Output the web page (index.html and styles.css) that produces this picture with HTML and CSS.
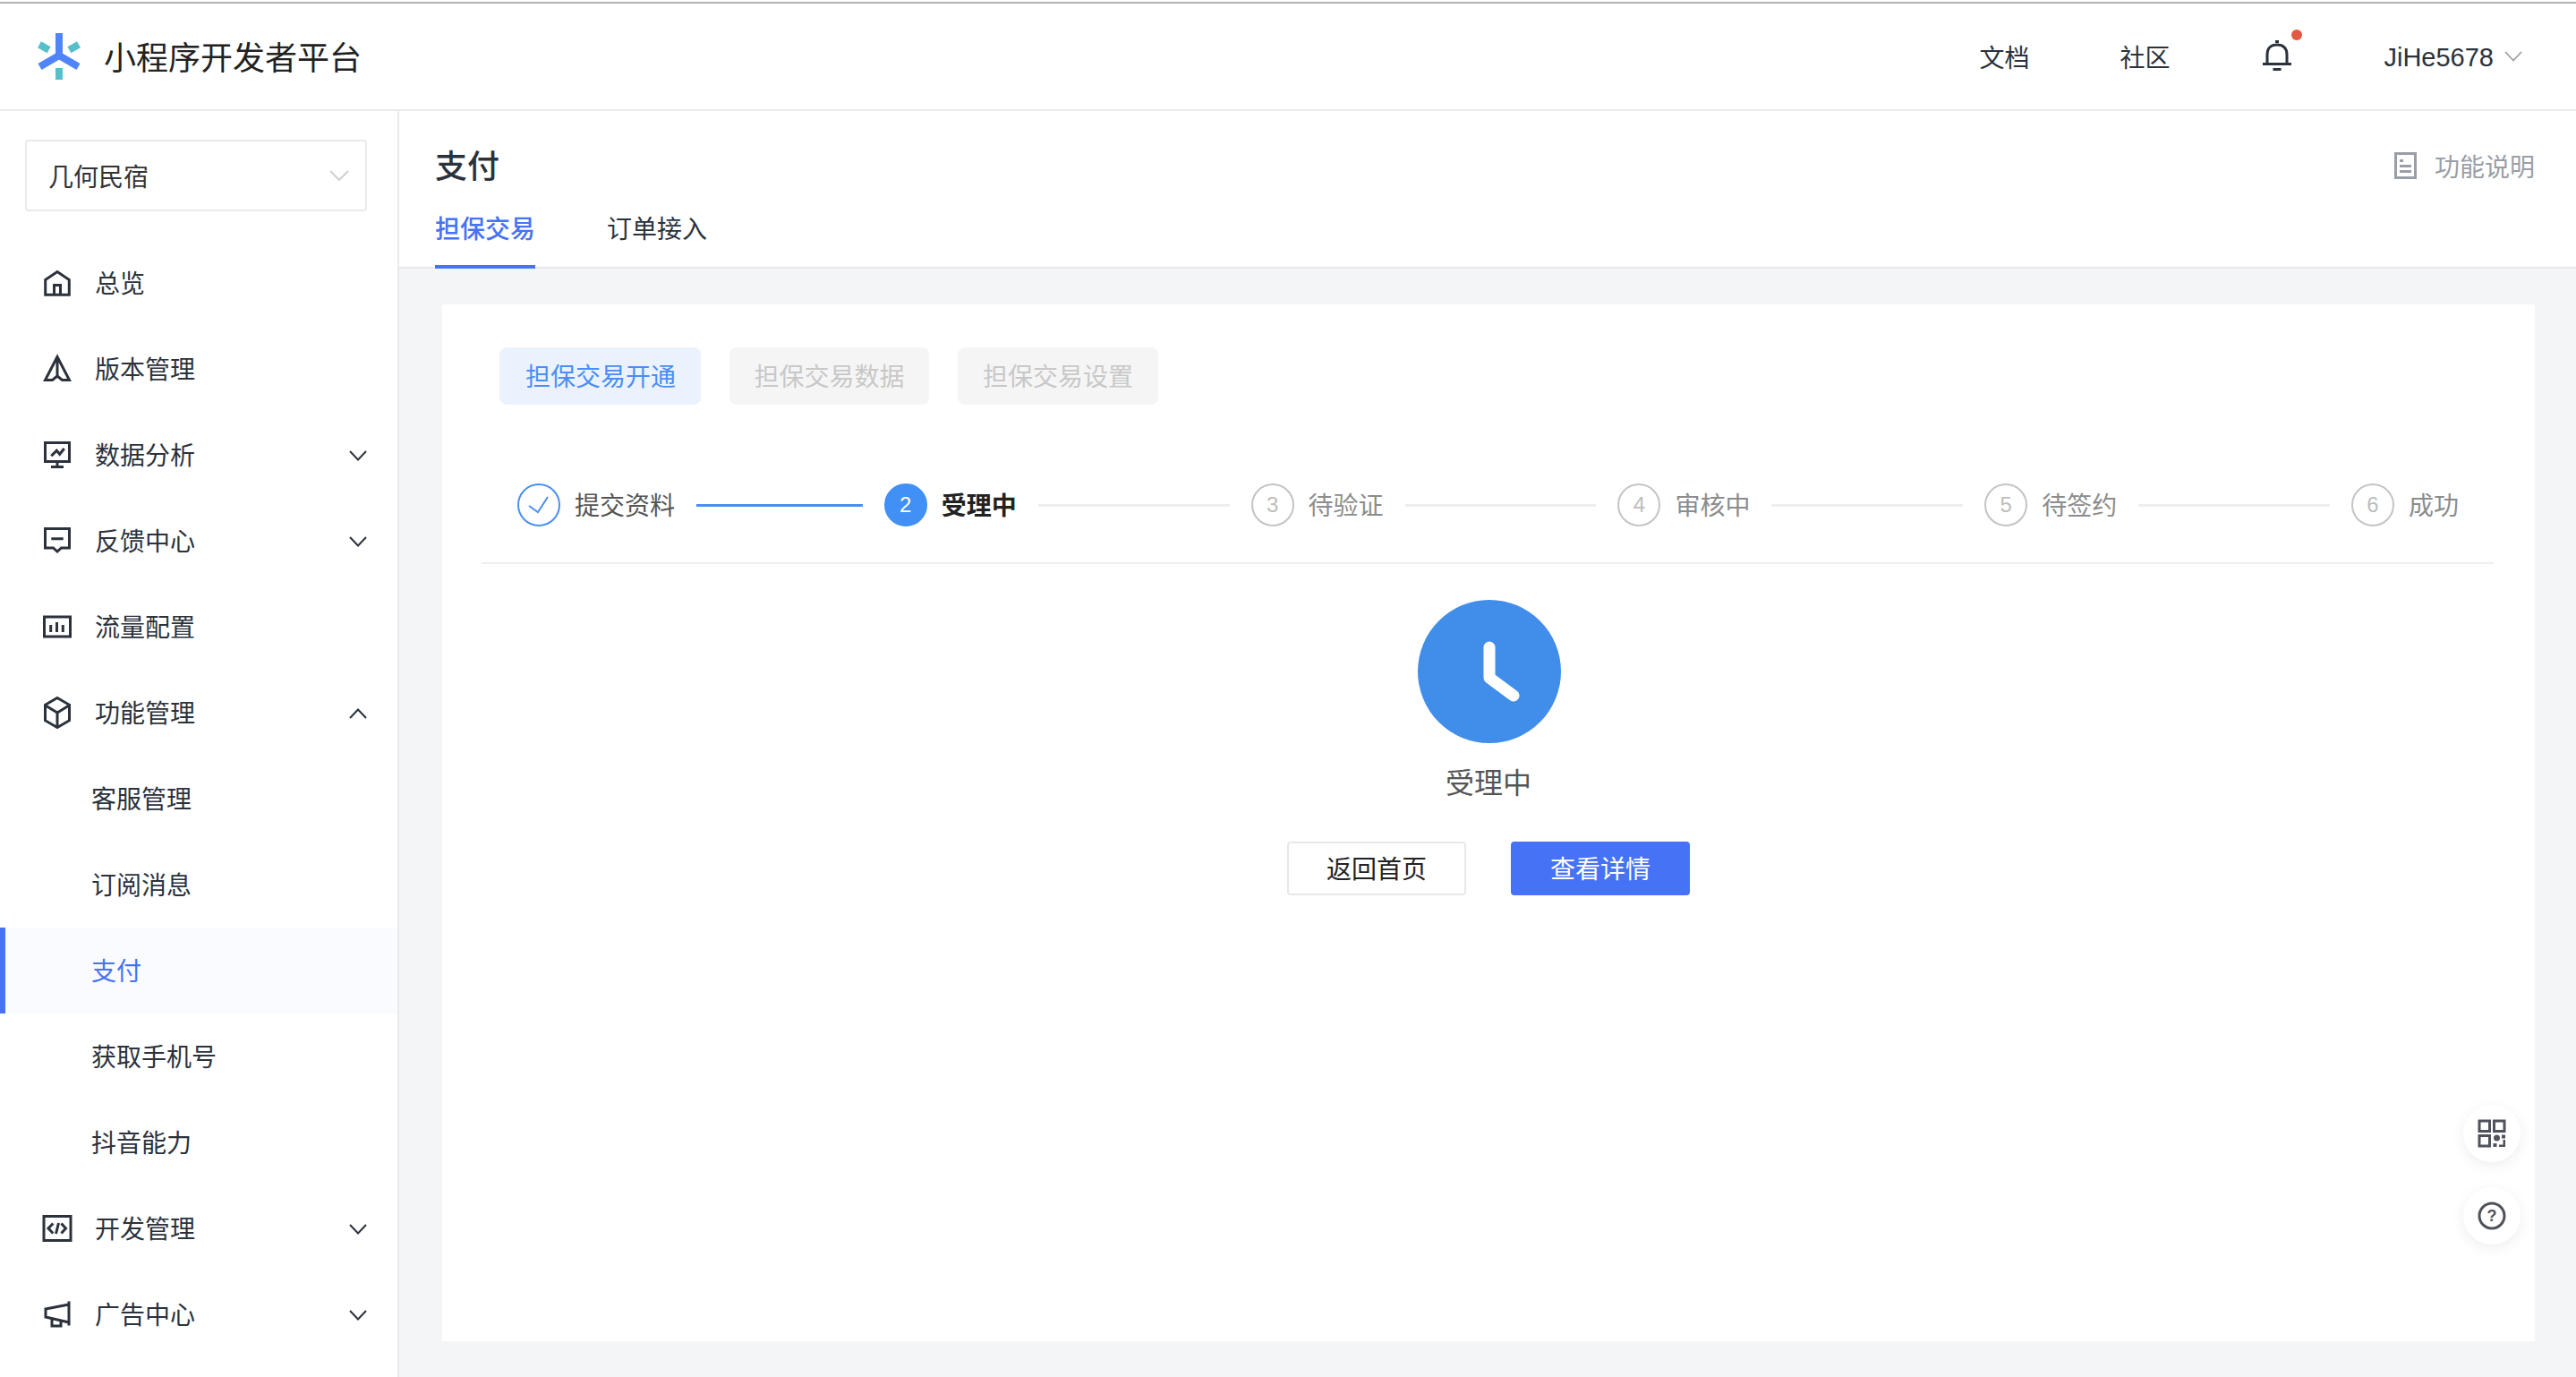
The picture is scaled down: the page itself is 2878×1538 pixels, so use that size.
FILE: index.html
```html
<!DOCTYPE html>
<html lang="zh-CN">
<head>
<meta charset="utf-8">
<title>小程序开发者平台</title>
<link rel="stylesheet" href="styles.css">
</head>
<body>
<div class="app">
  <div class="edge"></div>
  <header class="topbar">
    <div class="brand">
      <svg class="logo" viewBox="0 0 50 52" width="50" height="52">
        <path d="M25 0V26M25 25L3.5 37.500M25 25L46.500 37.500" fill="none" stroke="#4f84fb" stroke-width="8"/>
        <path d="M25 39V52M3 12.700L13.600 18.700M36.400 18.700L47 12.700" fill="none" stroke="#56c0c9" stroke-width="8"/>
      </svg>
      <span class="brand-name">小程序开发者平台</span>
    </div>
    <nav class="topnav">
      <a class="topnav-link">文档</a>
      <a class="topnav-link">社区</a>
      <span class="bell">
        <svg viewBox="0 0 34 36" width="34" height="36" fill="none" stroke="#2b323c" stroke-width="3">
          <path d="M1 26.500H33M6 26V16C6 9 10 5 17 5C24 5 28 9 28 16V26M15 1.500H19M12.500 32.500H21.500"/>
        </svg>
        <i class="bell-dot"></i>
      </span>
      <span class="user">JiHe5678</span>
      <svg class="user-caret" viewBox="0 0 20 12" width="20" height="12"><path d="M1 1L10 10.500L19 1" fill="none" stroke="#9a9ea6" stroke-width="1.800"/></svg>
    </nav>
  </header>
  <div class="main">
    <aside class="sidebar">
      <div class="select">
        <span class="select-text">几何民宿</span>
        <svg viewBox="0 0 22 12" width="22" height="12"><path d="M1 1L11 11L21 1" fill="none" stroke="#cfd0d4" stroke-width="2"/></svg>
      </div>
      <ul class="menu">
        <li class="menu-item">
          <svg class="ico" viewBox="0 0 32 32"><path d="M2.700 29.300V12.500L16 3.500L29.300 12.500V29.300Z"/><path d="M12.500 29V18.500H19.500V29"/></svg>
          <span class="menu-label">总览</span>
        </li>
        <li class="menu-item">
          <svg class="ico" viewBox="0 0 32 32"><path d="M16 2.500L2.500 28.500H10.500L16 24L21.500 28.500H29.500ZM16 2.500V24"/></svg>
          <span class="menu-label">版本管理</span>
        </li>
        <li class="menu-item">
          <svg class="ico" viewBox="0 0 32 32"><path d="M2.500 2.500H29.500V23.500H2.500ZM16 23.500V29M9 29.500H23"/><path d="M9.300 17.300L15.300 11.300L18.700 15.300L23.700 9"/></svg>
          <span class="menu-label">数据分析</span>
          <svg class="caret" viewBox="0 0 20 12"><path d="M1 1L10 10.500L19 1"/></svg>
        </li>
        <li class="menu-item">
          <svg class="ico" viewBox="0 0 32 32"><path d="M2.500 2.500H29.500V24H20.500L16 28L11.500 24H2.500ZM9.300 13.700H22.700"/></svg>
          <span class="menu-label">反馈中心</span>
          <svg class="caret" viewBox="0 0 20 12"><path d="M1 1L10 10.500L19 1"/></svg>
        </li>
        <li class="menu-item">
          <svg class="ico" viewBox="0 0 32 32"><path d="M1.500 5H30.500V27H1.500ZM8.700 14V22M15.500 11V22M22.300 14V22"/></svg>
          <span class="menu-label">流量配置</span>
        </li>
        <li class="menu-item">
          <svg class="ico" viewBox="0 0 32 32"><path d="M16 -0.500L29.500 7.300V24.700L16 32.500L2.500 24.700V7.300ZM2.500 7.800L16 16L29.500 7.800M16 16V32"/></svg>
          <span class="menu-label">功能管理</span>
          <svg class="caret" viewBox="0 0 20 12"><path d="M1 11L10 1.500L19 11"/></svg>
        </li>
        <li class="menu-item sub">客服管理</li>
        <li class="menu-item sub">订阅消息</li>
        <li class="menu-item sub active">支付</li>
        <li class="menu-item sub">获取手机号</li>
        <li class="menu-item sub">抖音能力</li>
        <li class="menu-item">
          <svg class="ico" viewBox="0 0 32 32"><path d="M1 2.500H31V29.500H1ZM11.300 10.500L6 16L11.300 21.500M20.500 10.500L25.500 16L20.500 21.500M17.500 10L14.500 22"/></svg>
          <span class="menu-label">开发管理</span>
          <svg class="caret" viewBox="0 0 20 12"><path d="M1 1L10 10.500L19 1"/></svg>
        </li>
        <li class="menu-item">
          <svg class="ico" viewBox="0 0 32 32"><path d="M29 1.500V28.500M29 5L3 10V19L29 25M10 21V29H20V23"/></svg>
          <span class="menu-label">广告中心</span>
          <svg class="caret" viewBox="0 0 20 12"><path d="M1 1L10 10.500L19 1"/></svg>
        </li>
      </ul>
    </aside>
    <section class="page">
      <div class="page-head">
        <div class="title-row">
          <h1 class="title">支付</h1>
          <a class="doc-link">
            <svg viewBox="0 0 25 30" width="25" height="30" fill="none" stroke="#9a9ea6" stroke-width="3"><path d="M1.500 1.500H23.500V28.500H1.500ZM6 9.500H10M6 15.500H19M6 21.500H19"/></svg>
            <span>功能说明</span>
          </a>
        </div>
        <div class="tabs">
          <a class="tab current">担保交易</a>
          <a class="tab">订单接入</a>
        </div>
      </div>
      <div class="page-body">
        <div class="card">
          <div class="chips">
            <span class="chip on">担保交易开通</span>
            <span class="chip">担保交易数据</span>
            <span class="chip">担保交易设置</span>
          </div>
          <div class="steps">
            <div class="step done">
              <span class="dot"><svg viewBox="0 0 44 44" width="44" height="44"><path d="M11 23L21 30L32 13" fill="none" stroke="#4a90f0" stroke-width="2"/></svg></span>
              <span class="step-title">提交资料</span>
              <i class="step-line"></i>
            </div>
            <div class="step now">
              <span class="dot">2</span>
              <span class="step-title">受理中</span>
              <i class="step-line"></i>
            </div>
            <div class="step">
              <span class="dot">3</span>
              <span class="step-title">待验证</span>
              <i class="step-line"></i>
            </div>
            <div class="step">
              <span class="dot">4</span>
              <span class="step-title">审核中</span>
              <i class="step-line"></i>
            </div>
            <div class="step">
              <span class="dot">5</span>
              <span class="step-title">待签约</span>
              <i class="step-line"></i>
            </div>
            <div class="step last">
              <span class="dot">6</span>
              <span class="step-title">成功</span>
            </div>
          </div>
          <div class="status">
            <svg class="clock" viewBox="0 0 160 160" width="160" height="160">
              <circle cx="80" cy="80" r="80" fill="#408dea"/>
              <path d="M80 53V87L107 107" fill="none" stroke="#fff" stroke-width="13" stroke-linecap="round" stroke-linejoin="round"/>
            </svg>
            <div class="status-text">受理中</div>
            <div class="actions">
              <a class="btn">返回首页</a>
              <a class="btn primary">查看详情</a>
            </div>
          </div>
          <div class="float-tools">
            <span class="float-btn">
              <svg viewBox="0 0 32 32" width="32" height="32"><path d="M2 2H13.500V13.500H2ZM18.500 2H30V13.500H18.500ZM2 18.500H13.500V30H2Z" fill="none" stroke="#50535c" stroke-width="3"/><circle cx="21.500" cy="21" r="3.500" fill="#50535c"/><path d="M27 17.500H31V21.500H27ZM17.500 27H21.500V31H17.500ZM28.500 23H31V31H24V28.500H28.500Z" fill="#50535c"/></svg>
            </span>
            <span class="float-btn">
              <svg viewBox="0 0 32 32" width="32" height="32"><circle cx="16" cy="16" r="14" fill="none" stroke="#50535c" stroke-width="3"/><text class="q-mark" x="16" y="22" text-anchor="middle">?</text></svg>
            </span>
          </div>
        </div>
      </div>
    </section>
  </div>
</div>
</body>
</html>
```
FILE: styles.css
```css
* { box-sizing: border-box; }
html, body { margin: 0; padding: 0; background: #fff; }
body {
  font-family: "Noto Sans CJK SC", "Liberation Sans", sans-serif;
  font-size: 28px;
  color: #2b323c;
}
ul { list-style: none; margin: 0; padding: 0; }
h1 { margin: 0; }
.app { height: 1538px; display: flex; flex-direction: column; overflow: hidden; }
.edge { height: 2px; margin-top: 2px; background: #b3b3b3; flex: none; }

.topbar {
  flex: none;
  height: 120px;
  border-bottom: 2px solid #e9e9ee;
  display: flex;
  align-items: center;
  justify-content: space-between;
  padding: 0 60px 0 41px;
}
.brand { display: flex; align-items: center; gap: 25px; }
.logo { display: block; }
.brand-name { font-size: 36px; color: #222; line-height: 52px; padding-bottom: 3px; }
.topnav { display: flex; align-items: center; }
.topnav-link { margin-right: 101px; line-height: 40px; }
.topnav-link + .topnav-link { margin-right: 103px; }
.bell { position: relative; display: block; width: 34px; height: 36px; margin-right: 102px; }
.bell svg { display: block; }
.bell-dot {
  position: absolute;
  left: 33px;
  top: -12px;
  width: 12px;
  height: 12px;
  border-radius: 50%;
  background: #e25a41;
}
.user { font-family: "Liberation Sans", sans-serif; font-size: 29px; color: #2b323c; padding-top: 2px; }
.user-caret { margin-left: 12px; }

.main { flex: 1; display: flex; min-height: 0; }
.sidebar {
  flex: none;
  width: 446px;
  border-right: 2px solid #e9e9ee;
  padding-top: 32px;
  background: #fff;
}
.select {
  width: 382px;
  height: 80px;
  margin-left: 28px;
  border: 2px solid #e9e9ee;
  border-radius: 4px;
  display: flex;
  align-items: center;
  justify-content: space-between;
  padding: 0 18px 0 24px;
  color: #333;
}
.select-text { padding-top: 0; }
.menu { margin-top: 32px; }
.menu-item {
  height: 96px;
  display: flex;
  align-items: center;
  padding: 0 34px 0 48px;
}
.ico {
  flex: none;
  width: 32px;
  height: 32px;
  overflow: visible;
  fill: none;
  stroke: #2b323c;
  stroke-width: 3;
}
.menu-label { margin-left: 26px; flex: 1; padding-bottom: 3px; }
.caret {
  flex: none;
  width: 20px;
  height: 12px;
  margin-top: 2px;
  fill: none;
  stroke: #2b323c;
  stroke-width: 2;
}
.sub { padding-left: 102px; padding-bottom: 3px; }
.active { background: #f9fbfe; box-shadow: inset 6px 0 0 #4672f6; color: #4672f6; }

.page { flex: 1; min-width: 0; display: flex; flex-direction: column; background: #f4f5f7; }
.page-head {
  flex: none;
  height: 176px;
  padding: 36px 46px 0 40px;
  background: #fff;
  border-bottom: 2px solid #e9e9ee;
}
.title-row { display: flex; align-items: center; justify-content: space-between; height: 50px; }
.title { font-size: 36px; font-weight: 500; line-height: 46px; height: 50px; color: #2b323c; }
.doc-link { display: flex; align-items: center; gap: 20px; color: #9a9ea6; }
.doc-link svg { display: block; }
.tabs { display: flex; gap: 80px; margin-top: 24px; }
.tab {
  display: block;
  line-height: 40px;
  height: 66px;
  padding-bottom: 22px;
  color: #2b323c;
}
.current { color: #4672f6; font-weight: 500; border-bottom: 4px solid #4672f6; }

.page-body { flex: 1; min-height: 0; padding: 40px 46px 40px 48px; }
.card { position: relative; height: 100%; background: #fff; padding-top: 48px; }
.chips { display: flex; gap: 32px; padding-left: 64px; }
.chip {
  height: 64px;
  width: 223px;
  padding-bottom: 3px;
  border-radius: 8px;
  background: #f5f5f5;
  color: #c8c8c8;
  display: flex;
  align-items: center;
  justify-content: center;
}
.chip:last-child { width: 224px; }
.on { width: 225px; padding-left: 1px; background: #ebf2fe; color: #4a8ef5; }

.steps {
  display: flex;
  align-items: center;
  margin: 88px 46px 0 44px;
  padding: 0 39px 40px 40px;
  border-bottom: 2px solid #eeeeee;
}
.step { flex: 1 1 0; display: flex; align-items: center; }
.last { flex: none; }
.dot {
  flex: none;
  width: 48px;
  height: 48px;
  border: 2px solid #c4c4c4;
  border-radius: 50%;
  display: flex;
  align-items: center;
  justify-content: center;
  font-family: "Liberation Sans", sans-serif;
  font-size: 24px;
  color: #bdbdbd;
}
.dot svg { display: block; }
.step-title { margin-left: 16px; color: #8c8c8c; line-height: 40px; padding-bottom: 3px; white-space: nowrap; }
.step-line { flex: 1; height: 3px; margin: 0 24px; background: #eeeeee; }
.done .dot { border-color: #4a90f0; }
.done .step-title { color: #555; }
.done .step-line { background: #4a90f0; }
.now .dot { background: #4090f5; border-color: #4090f5; color: #fff; }
.now .step-title { color: #222; font-weight: 700; }

.status { display: flex; flex-direction: column; align-items: center; padding-top: 40px; }
.clock { display: block; margin-left: 2px; }
.status-text { margin-top: 20px; font-size: 32px; line-height: 44px; padding-bottom: 2px; color: #555; }
.actions { display: flex; gap: 50px; margin-top: 44px; }
.btn {
  width: 200px;
  height: 60px;
  padding-bottom: 3px;
  border: 2px solid #e8e8e8;
  border-radius: 4px;
  display: flex;
  align-items: center;
  justify-content: center;
  color: #222;
}
.primary { background: #4672f6; border-color: #4672f6; color: #fff; }

.float-tools {
  position: absolute;
  right: 16px;
  bottom: 108px;
  display: flex;
  flex-direction: column;
  gap: 28px;
}
.float-btn {
  width: 64px;
  height: 64px;
  border-radius: 50%;
  background: #fff;
  box-shadow: 0 4px 16px rgba(0, 0, 0, 0.07);
  display: flex;
  align-items: center;
  justify-content: center;
}
.float-btn svg { display: block; }
.q-mark { font-family: "Liberation Sans", sans-serif; font-size: 18px; font-weight: 700; fill: #50535c; }
```
